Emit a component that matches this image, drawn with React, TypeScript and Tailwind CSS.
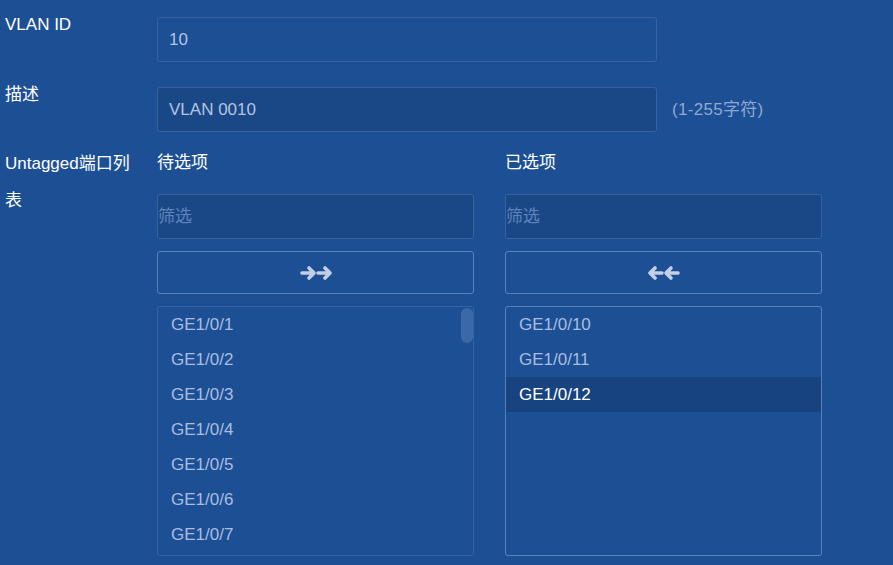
import React from "react";

const leftPorts = ["GE1/0/1", "GE1/0/2", "GE1/0/3", "GE1/0/4", "GE1/0/5", "GE1/0/6", "GE1/0/7"];
const rightPorts = ["GE1/0/10", "GE1/0/11", "GE1/0/12"];

function DoubleArrow({ flip }: { flip?: boolean }) {
  return (
    <svg
      width="32"
      height="16"
      viewBox="0 0 32 16"
      fill="none"
      stroke="#c3cfe6"
      strokeWidth="3.6"
      strokeLinecap="round"
      strokeLinejoin="round"
      className={flip ? "-scale-x-100" : ""}
    >
      <path d="M2 8h11M9 3l5 5-5 5" />
      <path d="M18 8h11M25 3l5 5-5 5" />
    </svg>
  );
}

function PortColumn({
  title,
  ports,
  selected,
  focused,
  scroll,
  flip,
}: {
  title: string;
  ports: string[];
  selected?: string;
  focused?: boolean;
  scroll?: boolean;
  flip?: boolean;
}) {
  return (
    <div className="flex w-[317px] flex-col">
      <div className="text-[17px] leading-[36px] text-white">{title}</div>
      <div className="mt-[13px] flex h-[45px] items-center rounded-[3px] border border-[#38629f] bg-[#1a4887] text-[17px] text-[#5f83b9]">
        筛选
      </div>
      <button className="mt-[12px] flex h-[43px] items-center justify-center rounded-[3px] border border-[#5a80bc]">
        <DoubleArrow flip={flip} />
      </button>
      <div
        className={
          "relative mt-[12px] h-[250px] overflow-hidden rounded-[3px] border " +
          (focused ? "border-[#5a80bc]" : "border-[#38629f]")
        }
      >
        {ports.map((p) => (
          <div
            key={p}
            className={
              "flex h-[35px] items-center pl-[13px] text-[17px] " +
              (p === selected ? "bg-[#174380] text-white" : "text-[#a8bde0]")
            }
          >
            {p}
          </div>
        ))}
        {scroll && (
          <div className="absolute right-0 top-[1px] h-[35px] w-[12px] rounded-full bg-[#3b68a8]" />
        )}
      </div>
    </div>
  );
}

export default function App() {
  return (
    <div
      className="h-[565px] overflow-hidden bg-[#1d4f94] pl-[5px]"
      style={{ fontFamily: '"Liberation Sans", Arial, "Noto Sans CJK SC", sans-serif' }}
    >
      {/* VLAN ID */}
      <div className="flex pt-[7px]">
        <div className="w-[152px] text-[17px] leading-[36px] text-white">VLAN ID</div>
        <div className="mt-[10px] flex h-[45px] w-[500px] items-center rounded-[3px] border border-[#38629f] pl-[11px] text-[17px] text-[#b3c4e2]">
          10
        </div>
      </div>

      {/* 描述 */}
      <div className="mt-[15px] flex">
        <div className="w-[152px] text-[17px] leading-[36px] text-white">描述</div>
        <div className="mt-[10px] flex h-[45px] w-[500px] items-center rounded-[3px] border border-[#38629f] bg-[#1a4887] pl-[11px] text-[17px] text-[#b3c4e2]">
          VLAN 0010
        </div>
        <div className="ml-[15px] mt-[10px] flex h-[45px] items-center text-[17px] tracking-[0.3px] text-[#8ea9d6]">
          (1-255字符)
        </div>
      </div>

      {/* Untagged ports */}
      <div className="mt-[13px] flex">
        <div className="w-[152px] pr-[16px]">
          <div className="text-[17px] leading-[37px] text-white">Untagged端口列表</div>
        </div>
        <div className="flex gap-[31px]">
          <PortColumn title="待选项" ports={leftPorts} scroll />
          <PortColumn title="已选项" ports={rightPorts} selected="GE1/0/12" focused flip />
        </div>
      </div>
    </div>
  );
}
